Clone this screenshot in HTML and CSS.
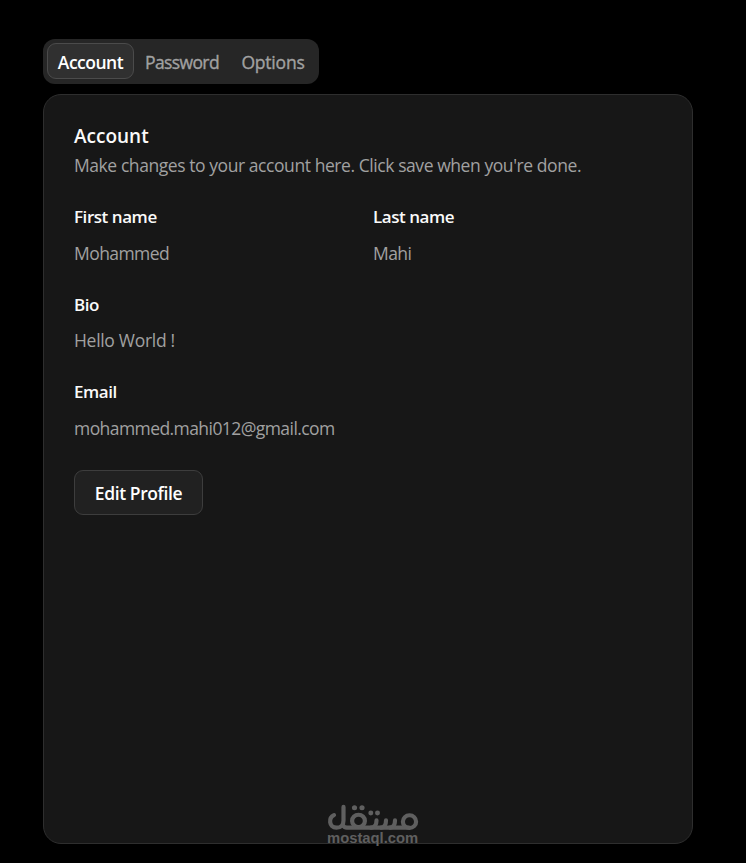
FILE: index.html
```html
<!DOCTYPE html>
<html lang="en">
<head>
<meta charset="utf-8">
<title>Account settings</title>
<link rel="stylesheet" href="styles.css">
</head>
<body>
<main class="page">
  <nav class="tabs">
    <button class="tab active">Account</button>
    <button class="tab tab-password">Password</button>
    <button class="tab tab-options">Options</button>
  </nav>
  <section class="card">
    <header>
      <h1 class="title">Account</h1>
      <p class="description">Make changes to your account here. Click save when you're done.</p>
    </header>
    <dl class="fields">
      <div class="field"><dt>First name</dt><dd>Mohammed</dd></div>
      <div class="field"><dt>Last name</dt><dd>Mahi</dd></div>
      <div class="field wide"><dt>Bio</dt><dd class="bio">Hello World !</dd></div>
      <div class="field wide"><dt>Email</dt><dd>mohammed.mahi012@gmail.com</dd></div>
    </dl>
    <button class="edit">Edit Profile</button>
  </section>
  <div class="watermark">
    <svg class="mark" viewBox="0 0 92 28" width="92" height="27" preserveAspectRatio="none" aria-hidden="true">
      <g fill="none" stroke="currentColor" stroke-width="4.2" stroke-linecap="round" stroke-linejoin="round">
        <path d="M7 11.5C1.5 14 1.5 24.5 9.5 24.5Q16.5 24.5 16.5 17V3"/>
        <path d="M16 22Q17 24.5 20 24.5H82"/>
        <circle cx="31.5" cy="17.5" r="6.4"/>
        <path d="M49.5 17Q49.5 24 44 24.5M59 17Q59 24 54 24.5M68 17Q68 24 63 24.5"/>
        <circle cx="82.5" cy="18.3" r="6.6"/>
      </g>
      <g fill="currentColor"><circle cx="27.5" cy="4" r="2.6"/><circle cx="35" cy="4" r="2.6"/><circle cx="43.8" cy="9.3" r="2.5"/><circle cx="50.5" cy="9.3" r="2.5"/></g>
    </svg>
    <span class="domain">mostaql.com</span>
  </div>
</main>
</body>
</html>
```
FILE: styles.css
```css
* { box-sizing: border-box; }
body { margin: 0; background: #000; color: #fafafa; font-family: "Segoe UI", "Open Sans", "Noto Sans", sans-serif; }
.page { position: relative; height: 863px; padding: 39px 53px 0 43px; overflow: hidden; }
.tabs { display: flex; width: 276px; height: 45px; padding: 4px; background: #262626; border-radius: 12px; }
.tab { flex: none; width: 87px; height: 36px; padding: 2px 0 0; border: 1px solid transparent; border-radius: 9px; background: none; color: #a1a1a1; font: 500 17.5px/32px "Segoe UI", "Open Sans", sans-serif; letter-spacing: -0.5px; white-space: nowrap; -webkit-text-stroke: 0.35px currentColor; }
.tab.active { background: #303030; border-color: #4b4b4b; color: #fff; font-weight: 600; -webkit-text-stroke: 0; }
.tab-password { width: 96px; letter-spacing: -0.6px; }
.tab-options { width: 86px; letter-spacing: -0.2px; }
.card { width: 650px; height: 750px; margin-top: 10px; padding: 29px 30px; background: #171717; border: 1px solid #2e2e2e; border-radius: 18px; }
.title { margin: 0; font-size: 19px; line-height: 25px; font-weight: 600; }
.description { margin: 3px 0 0; font-size: 17.5px; line-height: 26px; letter-spacing: -0.43px; color: #a1a1a1; white-space: nowrap; }
.fields { display: grid; grid-template-columns: 1fr 1fr; gap: 27px 10px; margin: 27px 0 0; }
.wide { grid-column: 1 / 3; }
dt { font-size: 17px; line-height: 24px; font-weight: 600; letter-spacing: -0.45px; }
dd { margin: 11px 0 0; font-size: 17.5px; line-height: 26px; letter-spacing: -0.57px; color: #a1a1a1; }
.bio { margin-top: 10px; letter-spacing: -0.3px; }
.edit { display: block; width: 129px; height: 45px; margin-top: 29px; padding: 2px 0 0; background: #212121; border: 1px solid #3d3d3d; border-radius: 9px; color: #fff; font: 600 17.5px/41px "Segoe UI", "Open Sans", sans-serif; letter-spacing: -0.4px; white-space: nowrap; }
.watermark { position: absolute; left: 327px; top: 804px; width: 92px; color: #5f5f5f; }
.mark { display: block; }
.domain { display: block; font: bold 14.8px/14px "Liberation Sans", Arial, sans-serif; white-space: nowrap; }
```
